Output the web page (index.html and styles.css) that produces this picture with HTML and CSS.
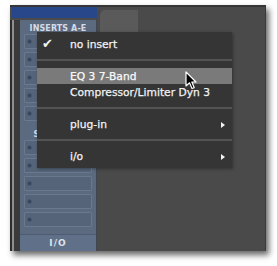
FILE: index.html
```html
<!DOCTYPE html>
<html>
<head>
<meta charset="utf-8">
<link rel="stylesheet" href="styles.css">
</head>
<body>
<div class="stage">
  <div class="panel">
    <div class="bluebar"></div>
    <div class="edge"></div>
    <div class="col">
      <div class="col-head">INSERTS A-E</div>
      <div class="slot"><span class="dot"></span></div>
      <div class="slot"><span class="dot"></span></div>
      <div class="slot"><span class="dot"></span></div>
      <div class="slot"><span class="dot"></span></div>
      <div class="slot"><span class="dot"></span></div>
      <div class="col-head sends">SENDS A-E</div>
      <div class="slot"><span class="dot"></span></div>
      <div class="slot"><span class="dot"></span></div>
      <div class="slot"><span class="dot"></span></div>
      <div class="slot"><span class="dot"></span></div>
      <div class="slot"><span class="dot"></span></div>
      <div class="io">I/O</div>
    </div>
    <div class="main"><div class="tab"></div></div>

    <div class="menu">
      <div class="item"><span class="mark">✔</span><span class="label">no insert</span></div>
      <div class="sep"></div>
      <div class="item hl"><span class="mark"></span><span class="label">EQ 3 7-Band</span></div>
      <div class="item"><span class="mark"></span><span class="label">Compressor/Limiter Dyn 3</span></div>
      <div class="sep"></div>
      <div class="item"><span class="mark"></span><span class="label">plug-in</span><span class="sub"></span></div>
      <div class="sep"></div>
      <div class="item"><span class="mark"></span><span class="label">i/o</span><span class="sub"></span></div>
    </div>
  </div>
  <svg class="cursor" width="13" height="19" viewBox="0 0 13 19">
    <path d="M1 1 L1 15 L4.5 11.8 L7 17.5 L9.2 16.6 L6.8 11 L11 11 Z" fill="#000" stroke="#fff" stroke-width="1.2" stroke-linejoin="round"/>
  </svg>
</div>
</body>
</html>
```
FILE: styles.css
```css
html, body {
  margin: 0;
  padding: 0;
  background: #ffffff;
}
.stage {
  position: relative;
  width: 277px;
  height: 266px;
  overflow: hidden;
  font-family: "DejaVu Sans", Verdana, sans-serif;
}
.panel {
  position: relative;
  margin: 5px 0 0 10px;
  width: 256px;
  height: 246px;
  box-sizing: border-box;
  background: #4a4a4a;
  border-top: 2px solid #363636;
  border-right: 1px solid #3a3a3a;
  box-shadow: 3px 4px 6px rgba(0, 0, 0, 0.6);
  display: grid;
  grid-template-columns: 10px 77px 1fr;
  grid-template-rows: 13px 1fr;
}
.bluebar {
  grid-column: 1 / 3;
  grid-row: 1;
  margin: 0 0 2px 2px;
  background: #28478a;
}
.edge {
  grid-column: 1;
  grid-row: 2;
  background: linear-gradient(to right, #2c2c2c 0 2px, #8f8f8f 2px 4px, #3a3a3a 4px);
}
.col {
  grid-column: 2;
  grid-row: 2;
  background: #5c6a7f;
  display: flex;
  flex-direction: column;
  border-right: 1px solid #3f4650;
}
.col-head {
  height: 14px;
  box-sizing: border-box;
  padding-top: 3px;
  line-height: 11px;
  font-size: 8px;
  font-weight: bold;
  color: #d4dbe6;
  text-align: center;
  letter-spacing: 0.1px;
}
.col-head.sends {
  height: 16px;
  padding-top: 5px;
}
.slot {
  height: 15px;
  margin: 0 4px 3px 4px;
  box-sizing: border-box;
  background: #56647a;
  border: 1px solid #6b7990;
  border-radius: 1px;
  display: flex;
  align-items: center;
  padding-left: 3px;
}
.dot {
  width: 3px;
  height: 3px;
  border-radius: 50%;
  background: #34425a;
  box-shadow: 0 0 0 1px #4a5870;
}
.io {
  margin-top: auto;
  height: 16px;
  line-height: 16px;
  background: #617089;
  border-top: 1px solid #4e5c72;
  color: #dde3ec;
  font-size: 9px;
  font-weight: bold;
  text-align: center;
  letter-spacing: 1px;
}
.main {
  grid-column: 3;
  grid-row: 1 / 3;
  padding: 3px 0 0 3px;
}
.tab {
  width: 38px;
  height: 22px;
  background: #5a5a5a;
  border-radius: 5px 0 0 0;
}
.menu {
  position: absolute;
  left: 27px;
  top: 25px;
  width: 195px;
  height: 136px;
  box-sizing: border-box;
  padding: 4px 0;
  background: #353535;
  box-shadow: 1px 1px 3px rgba(0, 0, 0, 0.35);
  display: flex;
  flex-direction: column;
}
.item {
  height: 16px;
  display: flex;
  align-items: center;
  color: #f2f2f2;
  font-size: 10.7px;
  -webkit-text-stroke: 0.25px #f2f2f2;
}
.item.hl {
  background: #7a7a7a;
  color: #ffffff;
}
.mark {
  width: 33px;
  box-sizing: border-box;
  padding-left: 5px;
  font-size: 13px;
  line-height: 16px;
  -webkit-text-stroke: 0;
}
.label {
  flex: 1;
}
.sub {
  width: 0;
  height: 0;
  margin-right: 7px;
  margin-top: 2px;
  border-top: 3px solid transparent;
  border-bottom: 3px solid transparent;
  border-left: 4px solid #f2f2f2;
}
.sep {
  height: 16px;
  display: flex;
  align-items: center;
}
.sep::after {
  content: "";
  flex: 1;
  height: 2px;
  background: #545454;
}
.cursor {
  position: absolute;
  left: 185px;
  top: 71px;
}
```
